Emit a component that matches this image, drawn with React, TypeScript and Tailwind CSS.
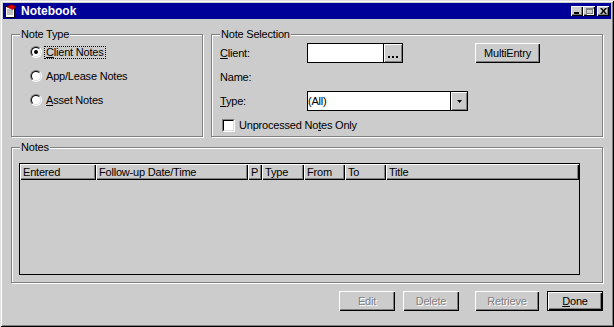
import React from "react";

const raised =
  "shadow-[inset_1px_1px_0_#fff,inset_-1px_-1px_0_#000,inset_-2px_-2px_0_#808080]";

function GroupBox({
  label,
  className,
  children,
}: {
  label: string;
  className: string;
  children?: React.ReactNode;
}) {
  return (
    <div
      className={
        "relative border border-[#808080] shadow-[1px_1px_0_#fff,inset_1px_1px_0_#fff] " +
        className
      }
    >
      <span className="absolute -top-[7px] left-[8px] px-[1px] bg-[#cccccc] leading-[13px]">
        {label}
      </span>
      {children}
    </div>
  );
}

function Radio({ checked }: { checked?: boolean }) {
  return (
    <div className="w-[12px] h-[12px] rounded-full border border-t-[#808080] border-l-[#808080] border-b-white border-r-white">
      <div className="w-full h-full rounded-full bg-white border border-t-black border-l-black border-b-[#dfdfdf] border-r-[#dfdfdf] flex items-center justify-center">
        {checked && <div className="w-[4px] h-[4px] rounded-full bg-black" />}
      </div>
    </div>
  );
}

function RadioRow({
  children,
  checked,
  focused,
}: {
  children: React.ReactNode;
  checked?: boolean;
  focused?: boolean;
}) {
  return (
    <div className="h-[24px] flex items-center">
      <Radio checked={checked} />
      <span
        className={
          "ml-[2px] px-[1px] leading-[11px] border border-dotted " +
          (focused ? "border-black" : "border-transparent")
        }
      >
        {children}
      </span>
    </div>
  );
}

function Btn({
  children,
  w,
  disabled,
  def,
}: {
  children: React.ReactNode;
  w: string;
  disabled?: boolean;
  def?: boolean;
}) {
  const inner = (
    <div
      className={
        "h-full w-full flex items-center justify-center bg-[#cccccc] " +
        raised +
        (disabled ? " text-[#808080] [text-shadow:1px_1px_0_#fff]" : "")
      }
    >
      {children}
    </div>
  );
  return (
    <div className={"h-[20px] " + w + (def ? " border border-black" : "")}>
      {inner}
    </div>
  );
}

export default function App() {
  const cols: { t: string; w: string }[] = [
    { t: "Entered", w: "w-[76px]" },
    { t: "Follow-up Date/Time", w: "w-[152px]" },
    { t: "P", w: "w-[14px]" },
    { t: "Type", w: "w-[42px]" },
    { t: "From", w: "w-[41px]" },
    { t: "To", w: "w-[41px]" },
  ];
  return (
    <div className="w-[614px] h-[327px] bg-[#cccccc] p-[3px] flex flex-col shadow-[inset_1px_1px_0_#dfdfdf,inset_-1px_-1px_0_#000,inset_2px_2px_0_#fff,inset_-2px_-2px_0_#808080] text-[11px] tracking-[-0.2px] text-black font-['Liberation_Sans',Arial,sans-serif] select-none">
      {/* Title bar */}
      <div className="h-[16px] bg-[#000099] flex items-center pl-[1px] pr-[2px]">
        <svg width="14" height="14" viewBox="0 0 14 14" className="shrink-0">
          <rect x="1.5" y="2.5" width="9" height="11" fill="#fff" stroke="#000" />
          <line x1="3" y1="6" x2="9" y2="6" stroke="#808080" />
          <line x1="3" y1="8" x2="9" y2="8" stroke="#808080" />
          <line x1="3" y1="10" x2="9" y2="10" stroke="#808080" />
          <path d="M3 3 L7 0.5 L12 2.5 L9 5.5 Z" fill="#e00000" stroke="#800000" strokeWidth="0.7" />
          <rect x="11" y="4" width="2" height="6" fill="#0000c0" />
        </svg>
        <span className="ml-[3px] text-white font-bold text-[12px] tracking-normal leading-[16px]">
          Notebook
        </span>
        <div className="ml-auto flex items-center">
          <div className={"w-[12px] h-[10px] bg-[#cccccc] flex items-end pl-[3px] pb-[2px] " + raised}>
            <div className="w-[5px] h-[2px] bg-black" />
          </div>
          <div className={"w-[12px] h-[10px] bg-[#cccccc] flex items-center justify-center " + raised}>
            <div className="w-[7px] h-[6px] border border-[#808080] border-t-2 shadow-[1px_1px_0_#fff] -mt-[1px]" />
          </div>
          <div className={"ml-[2px] w-[12px] h-[10px] bg-[#cccccc] flex items-center justify-center " + raised}>
            <svg width="7" height="6" viewBox="0 0 7 6" className="-mt-[1px]">
              <path d="M0 0 H2 L3.5 2 L5 0 H7 L4.5 3 L7 6 H5 L3.5 4 L2 6 H0 L2.5 3 Z" fill="#000" />
            </svg>
          </div>
        </div>
      </div>

      {/* Body */}
      <div className="flex-1 px-[8px] flex flex-col">
        <div className="flex gap-[8px] mt-[15px] h-[103px]">
          <GroupBox label="Note Type" className="w-[192px] h-full pt-[5px] pl-[18px]">
            <RadioRow checked focused>
              <span className="underline underline-offset-[1px]">C</span>lient Notes
            </RadioRow>
            <RadioRow>App/Lease Notes</RadioRow>
            <RadioRow>
              <span className="underline underline-offset-[1px]">A</span>sset Notes
            </RadioRow>
          </GroupBox>

          <GroupBox label="Note Selection" className="w-[392px] h-full pt-[8px] pl-[8px]">
            <div className="h-[20px] flex items-center">
              <span className="w-[87px]">
                <span className="underline underline-offset-[1px]">C</span>lient:
              </span>
              <div className="w-[96px] h-[20px] flex border border-black bg-white">
                <div className="flex-1" />
                <div className="w-[19px] h-full bg-[#cccccc] border-l border-black flex items-end justify-center gap-[2px] pb-[4px] shadow-[inset_1px_1px_0_#fff,inset_-1px_-1px_0_#808080]">
                  <div className="w-[2px] h-[2px] bg-black" />
                  <div className="w-[2px] h-[2px] bg-black" />
                  <div className="w-[2px] h-[2px] bg-black" />
                </div>
              </div>
              <div className="w-[72px]" />
              <Btn w="w-[65px]">MultiEntry</Btn>
            </div>
            <div className="h-[20px] mt-[4px] flex items-center">Name:</div>
            <div className="h-[20px] mt-[4px] flex items-center">
              <span className="w-[87px]">
                <span className="underline underline-offset-[1px]">T</span>ype:
              </span>
              <div className="w-[161px] h-[20px] flex border border-black bg-white">
                <div className="flex-1 flex items-center">(All)</div>
                <div className="w-[17px] h-full bg-[#cccccc] border-l border-black flex items-center justify-center shadow-[inset_1px_1px_0_#fff,inset_-1px_-1px_0_#808080]">
                  <svg width="5" height="3" viewBox="0 0 5 3">
                    <path d="M0 0 H5 L2.5 3 Z" fill="#000" />
                  </svg>
                </div>
              </div>
            </div>
            <div className="h-[20px] mt-[4px] flex items-center">
              <div className="ml-[2px] w-[13px] h-[13px] border border-t-[#808080] border-l-[#808080] border-b-white border-r-white">
                <div className="w-full h-full bg-white border border-t-black border-l-black border-b-[#dfdfdf] border-r-[#dfdfdf]" />
              </div>
              <span className="ml-[4px]">
                Unprocessed No<span className="underline underline-offset-[1px]">t</span>es Only
              </span>
            </div>
          </GroupBox>
        </div>

        <GroupBox label="Notes" className="mt-[10px] h-[136px] pt-[15px] pl-[7px]">
          <div className="w-[561px] h-[112px] border border-black flex flex-col">
            <div className="h-[16px] flex">
              {cols.map((c) => (
                <div
                  key={c.t}
                  className={
                    c.w +
                    " h-full flex items-center pl-[3px] whitespace-nowrap overflow-hidden bg-[#cccccc] shadow-[inset_1px_1px_0_#fff,inset_-1px_-1px_0_#000,inset_-2px_-2px_0_#808080]"
                  }
                >
                  {c.t}
                </div>
              ))}
              <div className="flex-1 h-full flex items-center pl-[3px] bg-[#cccccc] shadow-[inset_1px_1px_0_#fff,inset_-1px_-1px_0_#000,inset_-2px_-2px_0_#808080]">
                Title
              </div>
            </div>
            <div className="flex-1" />
          </div>
        </GroupBox>

        <div className="mt-[8px] flex justify-end">
          <Btn w="w-[56px]" disabled>Edit</Btn>
          <div className="w-[8px]" />
          <Btn w="w-[56px]" disabled>Delete</Btn>
          <div className="w-[16px]" />
          <Btn w="w-[64px]" disabled>Retrieve</Btn>
          <div className="w-[8px]" />
          <Btn w="w-[56px]" def>
            <span>
              <span className="underline underline-offset-[1px]">D</span>one
            </span>
          </Btn>
        </div>
      </div>
    </div>
  );
}
